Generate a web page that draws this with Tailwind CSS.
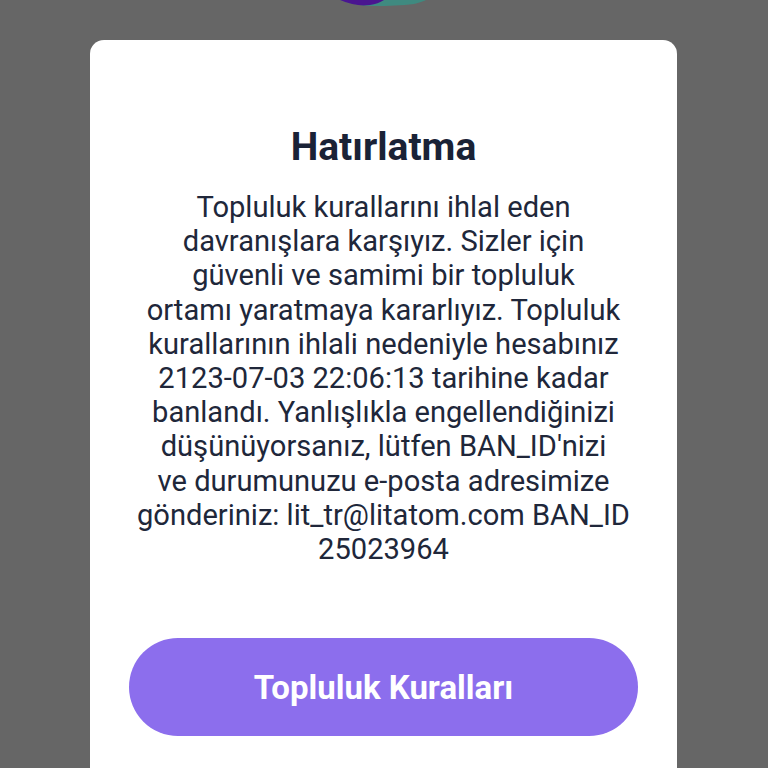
<!DOCTYPE html>
<html lang="tr">
<head>
  <meta charset="UTF-8" />
  <meta name="viewport" content="width=device-width, initial-scale=1.0" />
  <title>Hatırlatma</title>
  <script src="https://cdn.jsdelivr.net/npm/@tailwindcss/browser@4"></script>
</head>
<body class="bg-[#666666] font-['Roboto',sans-serif] h-[768px] overflow-hidden">
  <!-- avatar peeking over the card -->
  <svg class="absolute left-[330px] top-0" width="100" height="10" viewBox="0 0 100 10">
    <path d="M10 0 Q26 6 44 6 Q66 6 84 4 Q92 2 96 0 Z" fill="#3f8a80" />
    <path d="M10 0 Q26 7 40 5 Q48 4 54 0 Z" fill="#4a1590" />
  </svg>
  <main class="w-[587px] h-[760px] ml-[90px] translate-y-[40px] bg-white rounded-[14px] flex flex-col items-center">
    <h1 class="mt-[85px] text-[39px] leading-[44px] font-bold text-[#1a2236]">Hatırlatma</h1>
    <p class="mt-[21px] w-[540px] text-center text-[29.1px] leading-[34.2px] text-[#20273a]">
      Topluluk kurallarını ihlal eden<br>davranışlara karşıyız. Sizler için<br>güvenli ve samimi bir topluluk<br>ortamı yaratmaya kararlıyız. Topluluk<br>kurallarının ihlali nedeniyle hesabınız<br>2123-07-03 22:06:13 tarihine kadar<br>banlandı. Yanlışlıkla engellendiğinizi<br>düşünüyorsanız, lütfen BAN_ID'nizi<br>ve durumunuzu e-posta adresimize<br>gönderiniz: lit_tr@litatom.com BAN_ID<br>25023964
    </p>
    <button class="mt-[72px] w-[509px] h-[98px] pt-[2px] rounded-full bg-[#8c6eed] text-white text-[33px] font-bold">Topluluk Kuralları</button>
  </main>
</body>
</html>
